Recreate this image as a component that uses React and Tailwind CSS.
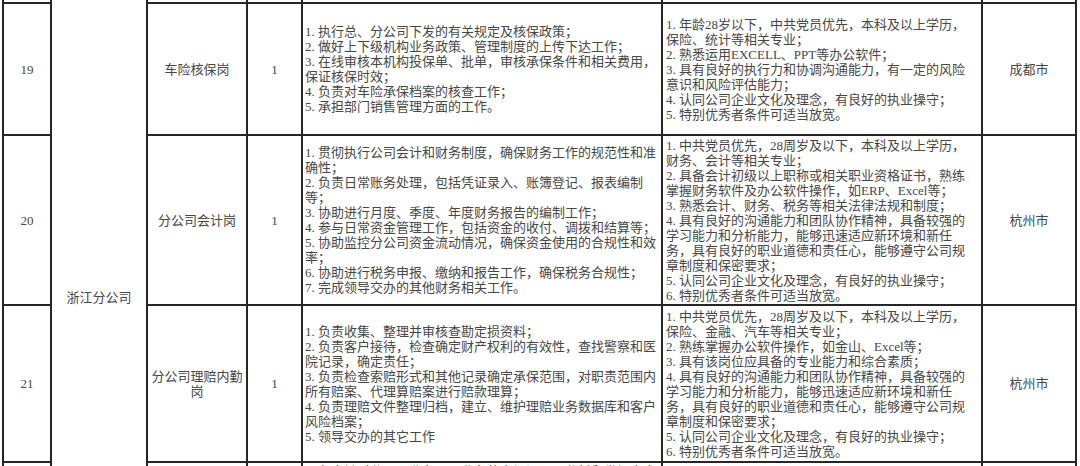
const font = "font-['Liberation_Serif','Noto_Sans_CJK_SC',serif]";

const rows = [
  {
    no: "19",
    post: ["车险核保岗"],
    count: "1",
    duties: [
      "1. 执行总、分公司下发的有关规定及核保政策；",
      "2. 做好上下级机构业务政策、管理制度的上传下达工作；",
      "3. 在线审核本机构投保单、批单，审核承保条件和相关费用，",
      "保证核保时效；",
      "4. 负责对车险承保档案的核查工作；",
      "5. 承担部门销售管理方面的工作。",
    ],
    reqs: [
      "1. 年龄28岁以下，中共党员优先，本科及以上学历，",
      "保险、统计等相关专业；",
      "2. 熟悉运用EXCELL、PPT等办公软件；",
      "3. 具有良好的执行力和协调沟通能力，有一定的风险",
      "意识和风险评估能力；",
      "4. 认同公司企业文化及理念，有良好的执业操守；",
      "5. 特别优秀者条件可适当放宽。",
    ],
    city: "成都市",
  },
  {
    no: "20",
    post: ["分公司会计岗"],
    count: "1",
    duties: [
      "1. 贯彻执行公司会计和财务制度，确保财务工作的规范性和准",
      "确性；",
      "2. 负责日常账务处理，包括凭证录入、账簿登记、报表编制",
      "等；",
      "3. 协助进行月度、季度、年度财务报告的编制工作；",
      "4. 参与日常资金管理工作，包括资金的收付、调拨和结算等；",
      "5. 协助监控分公司资金流动情况，确保资金使用的合规性和效",
      "率；",
      "6. 协助进行税务申报、缴纳和报告工作，确保税务合规性；",
      "7. 完成领导交办的其他财务相关工作。",
    ],
    reqs: [
      "1. 中共党员优先，28周岁及以下，本科及以上学历，",
      "财务、会计等相关专业；",
      "2. 具备会计初级以上职称或相关职业资格证书，熟练",
      "掌握财务软件及办公软件操作，如ERP、Excel等；",
      "3. 熟悉会计、财务、税务等相关法律法规和制度；",
      "4. 具有良好的沟通能力和团队协作精神，具备较强的",
      "学习能力和分析能力，能够迅速适应新环境和新任",
      "务，具有良好的职业道德和责任心，能够遵守公司规",
      "章制度和保密要求；",
      "5. 认同公司企业文化及理念，有良好的执业操守；",
      "6. 特别优秀者条件可适当放宽。",
    ],
    city: "杭州市",
  },
  {
    no: "21",
    post: ["分公司理赔内勤", "岗"],
    count: "1",
    duties: [
      "1. 负责收集、整理并审核查勘定损资料；",
      "2. 负责客户接待，检查确定财产权利的有效性，查找警察和医",
      "院记录，确定责任；",
      "3. 负责检查索赔形式和其他记录确定承保范围，对职责范围内",
      "所有赔案、代理算赔案进行赔款理算；",
      "4. 负责理赔文件整理归档，建立、维护理赔业务数据库和客户",
      "风险档案；",
      "5. 领导交办的其它工作",
    ],
    reqs: [
      "1. 中共党员优先，28周岁及以下，本科及以上学历，",
      "保险、金融、汽车等相关专业；",
      "2. 熟练掌握办公软件操作，如金山、Excel等；",
      "3. 具有该岗位应具备的专业能力和综合素质；",
      "4. 具有良好的沟通能力和团队协作精神，具备较强的",
      "学习能力和分析能力，能够迅速适应新环境和新任",
      "务，具有良好的职业道德和责任心，能够遵守公司规",
      "章制度和保密要求；",
      "5. 认同公司企业文化及理念，有良好的执业操守；",
      "6. 特别优秀者条件可适当放宽。",
    ],
    city: "杭州市",
  },
];

const cell = "border-r-2 border-b-2 border-[#262626] overflow-hidden";

const Lines = ({lines}) => (
  <div>
    {lines.map((l, i) => (
      <div key={i} className="whitespace-nowrap">{l}</div>
    ))}
  </div>
);

export default function App() {
  return (
    <div lang="zh-CN" className={`h-[466px] w-[1080px] overflow-hidden bg-white text-[13px] leading-[15px] text-[#474747] ${font}`}>
      <div className="ml-[2px] grid grid-cols-[48px_96px_100px_55px_360px_320px_94px] grid-rows-[4px_132px_170px_157px_200px] border-l-2 border-[#262626]">
        {/* merged branch cell */}
        <div className="col-start-2 row-start-1 row-span-5 border-r-2 border-[#262626] pt-[290px] text-center">
          浙江分公司
        </div>

        {/* sliver of the row above */}
        <div className={cell}></div>
        <div className={cell}></div>
        <div className={cell}></div>
        <div className={cell}></div>
        <div className={cell}></div>
        <div className={cell}></div>

        {rows.map((r) => (
          <Row key={r.no} r={r} />
        ))}

        {/* next row, cut off by the window */}
        <div className={cell}></div>
        <div className={cell}></div>
        <div className={cell}></div>
        <div className={`${cell} pl-[2px] pt-[1px]`}>
          <Lines lines={["1. 负责针对分公司业务开展业务的市场调研，分析和发掘客户需", "求，制定业务发展计划；"]} />
        </div>
        <div className={cell}></div>
        <div className={cell}></div>
      </div>
    </div>
  );
}

const Row = ({r}) => (
  <>
    <div className={`${cell} flex items-center justify-center`}>{r.no}</div>
    <div className={`${cell} flex flex-col items-center justify-center text-center`}>
      {r.post.map((p, i) => (
        <div key={i}>{p}</div>
      ))}
    </div>
    <div className={`${cell} flex items-center justify-center`}>{r.count}</div>
    <div className={`${cell} flex items-center pl-[2px]`}>
      <Lines lines={r.duties} />
    </div>
    <div className={`${cell} flex items-center pl-[3px]`}>
      <Lines lines={r.reqs} />
    </div>
    <div className={`${cell} flex items-center justify-center`}>{r.city}</div>
  </>
);
